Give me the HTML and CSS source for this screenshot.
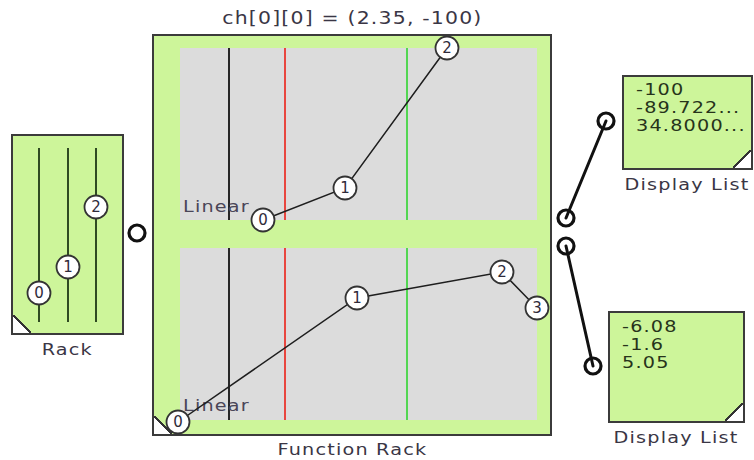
FILE: index.html
```html
<!DOCTYPE html>
<html lang="en">
<head>
    <meta charset="UTF-8">
    <title>Function Rack</title>
    <link rel="stylesheet" href="styles.css">
</head>
<body>

<div class="canvas">

    <!-- Rack -->
    <div class="block rack-block">
        <div class="box rack">
            <svg class="rack-svg" width="109" height="197">
                <line class="slider" x1="26" y1="12" x2="26" y2="186"/>
                <line class="slider" x1="55" y1="12" x2="55" y2="186"/>
                <line class="slider" x1="83" y1="12" x2="83" y2="186"/>
                <g class="knob" transform="translate(26 157)"><circle r="11.5"/><text y="5">0</text></g>
                <g class="knob" transform="translate(55 131)"><circle r="11.5"/><text y="5">1</text></g>
                <g class="knob" transform="translate(83 71)"><circle r="11.5"/><text y="5">2</text></g>
            </svg>
        </div>
        <div class="caption"><span>Rack</span></div>
    </div>

    <!-- Function Rack -->
    <div class="block frack-block">
        <div class="title"><span>ch[0][0] = (2.35, -100)</span></div>
        <div class="box frack">
            <div class="panel">
                <svg width="357" height="172">
                    <line class="mark black" x1="49" y1="0" x2="49" y2="172"/>
                    <line class="mark red" x1="105" y1="0" x2="105" y2="172"/>
                    <line class="mark green" x1="227" y1="0" x2="227" y2="172"/>
                    <text class="curve-name" transform="translate(3 164) scale(1.2 1)">Linear</text>
                    <polyline class="curve" points="83,172 165,140 267,0"/>
                    <g class="knob" transform="translate(83 172)"><circle r="11.5"/><text y="5">0</text></g>
                    <g class="knob" transform="translate(165 140)"><circle r="11.5"/><text y="5">1</text></g>
                    <g class="knob" transform="translate(267 0)"><circle r="11.5"/><text y="5">2</text></g>
                </svg>
            </div>
            <div class="panel">
                <svg width="357" height="172">
                    <line class="mark black" x1="49" y1="0" x2="49" y2="172"/>
                    <line class="mark red" x1="105" y1="0" x2="105" y2="172"/>
                    <line class="mark green" x1="227" y1="0" x2="227" y2="172"/>
                    <text class="curve-name" transform="translate(3 163) scale(1.2 1)">Linear</text>
                    <polyline class="curve" points="-2,174 177,50 322,24 357,60"/>
                    <g class="knob" transform="translate(-2 174)"><circle r="11.5"/><text y="5">0</text></g>
                    <g class="knob" transform="translate(177 50)"><circle r="11.5"/><text y="5">1</text></g>
                    <g class="knob" transform="translate(322 24)"><circle r="11.5"/><text y="5">2</text></g>
                    <g class="knob" transform="translate(357 60)"><circle r="11.5"/><text y="5">3</text></g>
                </svg>
            </div>
        </div>
        <div class="caption"><span>Function Rack</span></div>
    </div>

    <!-- Display lists -->
    <div class="block list-block list-top">
        <div class="box display">
            <div class="values">
                <div>-100</div>
                <div>-89.722...</div>
                <div>34.8000...</div>
            </div>
        </div>
        <div class="caption"><span>Display List</span></div>
    </div>

    <div class="block list-block list-bottom">
        <div class="box display">
            <div class="values">
                <div>-6.08</div>
                <div>-1.6</div>
                <div>5.05</div>
            </div>
        </div>
        <div class="caption"><span>Display List</span></div>
    </div>

    <!-- Wires and pins -->
    <svg class="wires" width="754" height="460">
        <circle class="pin" cx="137" cy="233" r="8"/>
        <circle class="pin" cx="566" cy="218" r="8"/>
        <circle class="pin" cx="566" cy="246" r="8"/>
        <circle class="pin" cx="606" cy="121" r="8"/>
        <circle class="pin" cx="593" cy="366" r="8"/>
        <line class="wire" x1="566" y1="218" x2="606" y2="121"/>
        <line class="wire" x1="566" y1="246" x2="593" y2="366"/>
    </svg>

</div>

</body>
</html>
```

FILE: styles.css
```css
body {
    margin: 0;
    background: #fff;
    font-family: 'DejaVu Sans', Verdana, sans-serif;
    color: #3a3645;
}
.canvas {
    position: relative;
    width: 754px;
    height: 460px;
    overflow: hidden;
    background: #fff;
}
.block {
    position: absolute;
    display: flex;
    flex-direction: column;
    align-items: stretch;
}
.rack-block {
    left: 11px;
    top: 134px;
    width: 113px;
}
.frack-block {
    left: 152px;
    top: 0;
    width: 400px;
}
.list-top {
    left: 622px;
    top: 75px;
    width: 131px;
}
.list-bottom {
    left: 608px;
    top: 311px;
    width: 137px;
}
.box {
    position: relative;
    box-sizing: border-box;
    background: #cdf59a;
    border: 2px solid #3b3b3b;
}
.box::before {
    content: "";
    position: absolute;
    bottom: 0;
    left: 0;
    width: 18px;
    height: 18px;
    background: linear-gradient(to bottom left, transparent 47%, #333 47%, #333 53%, #fff 53%);
}
.display::before {
    left: auto;
    right: 0;
    background: linear-gradient(to bottom right, transparent 47%, #333 47%, #333 53%, #fff 53%);
}
.caption, .title {
    text-align: center;
    font-size: 16px;
    line-height: 22px;
    letter-spacing: 1px;
    white-space: nowrap;
}
.caption {
    margin-top: 4px;
}
.frack-block .caption {
    margin-top: 3px;
}
.caption span, .title span {
    display: inline-block;
    transform: scaleX(1.2);
}
.title {
    font-size: 17px;
    line-height: 36px;
    height: 34px;
}
.rack {
    height: 201px;
}
.rack-svg {
    display: block;
    overflow: visible;
}
.slider {
    stroke: #2f4a22;
    stroke-width: 2;
}
.frack {
    height: 402px;
    display: flex;
    flex-direction: column;
    gap: 28px;
    padding: 12px 13px 0 26px;
}
.panel {
    position: relative;
    width: 357px;
    height: 172px;
    background: #dcdcdc;
}
.panel svg {
    display: block;
    overflow: visible;
}
.mark {
    stroke-width: 2;
}
.mark.black { stroke: #262626; }
.mark.red { stroke: #e8463f; }
.mark.green { stroke: #52d652; }
.curve {
    fill: none;
    stroke: #1e1e1e;
    stroke-width: 1.5;
}
.curve-name {
    font-size: 16px;
    letter-spacing: 1px;
    fill: #4a4658;
}
.knob circle {
    fill: #fff;
    stroke: #333;
    stroke-width: 1.8;
}
.knob text {
    font-size: 15px;
    text-anchor: middle;
    fill: #2f2b3a;
}
.display {
    height: 95px;
    padding: 4px 0 0 12px;
}
.list-bottom .display {
    height: 112px;
    padding-top: 5px;
}
.values {
    font-size: 16px;
    line-height: 18px;
    letter-spacing: 1px;
    color: #26331a;
    white-space: nowrap;
    transform: scaleX(1.2);
    transform-origin: left top;
}
.wires {
    position: absolute;
    left: 0;
    top: 0;
    pointer-events: none;
}
.pin {
    fill: #fff;
    stroke: #111;
    stroke-width: 3.2;
}
.wire {
    stroke: #111;
    stroke-width: 3;
    stroke-linecap: round;
}
```
